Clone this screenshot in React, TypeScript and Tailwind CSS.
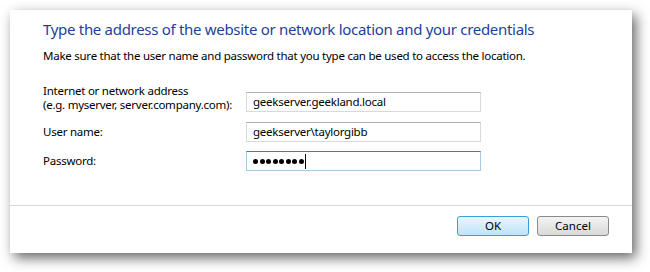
import React from "react";

export default function App() {
  const font = { fontFamily: '"Noto Sans", "Open Sans", sans-serif' };
  return (
    <div className="w-[650px] h-[272px] bg-white pt-[10px] pl-[10px] overflow-hidden" style={font}>
      <div className="w-[622px] h-[243px] bg-white flex flex-col shadow-[4px_5px_12px_rgba(0,0,0,0.6)]">
        <div className="flex-1 pl-[33px] pt-[8px]">
          <div className="text-[15px] leading-[22px] text-[#1e3f9c] whitespace-nowrap tracking-[-0.3px]">
            Type the address of the website or network location and your credentials
          </div>
          <div className="mt-[8px] text-[11.5px] leading-[16px] text-black whitespace-nowrap tracking-[-0.25px]">
            Make sure that the user name and password that you type can be used to access the location.
          </div>
          <div className="mt-[20px] flex flex-col text-[11.5px] text-black tracking-[-0.25px]">
            <div className="flex items-start">
              <div className="w-[203px] leading-[14px] whitespace-nowrap">
                <div>Internet or network address</div>
                <div>(e.g. myserver, server.company.com):</div>
              </div>
              <div className="mt-[8px] w-[235px] h-[20px] border border-[#d5d9e0] border-t-[#abadb3] flex items-center pl-[6px] leading-none">
                geekserver.geekland.local
              </div>
            </div>
            <div className="flex items-center mt-[10px]">
              <div className="w-[203px]">User name:</div>
              <div className="w-[235px] h-[20px] border border-[#d5d9e0] border-t-[#abadb3] flex items-center pl-[6px] leading-none">
                geekserver\taylorgibb
              </div>
            </div>
            <div className="flex items-center mt-[9px]">
              <div className="w-[203px]">Password:</div>
              <div className="w-[235px] h-[20px] border border-[#a4c9e3] border-t-[#3d7bad] flex items-center pl-[6px]">
                <span className="flex items-center gap-[1.5px]">
                  {Array.from({ length: 8 }).map((_, i) => (
                    <span key={i} className="w-[5px] h-[5px] rounded-full bg-black" />
                  ))}
                </span>
                <span className="ml-[1px] w-[1px] h-[15px] bg-black" />
              </div>
            </div>
          </div>
        </div>
        <div className="h-[48px] border-t border-[#d8d8d8] flex justify-end items-start pt-[10px] pr-[23px] gap-[8px]">
          <button className="w-[72px] h-[20px] rounded-[3px] border border-[#3c9ed8] bg-gradient-to-b from-[#eaf6fd] to-[#bfe3f8] text-[11.5px] leading-none text-black">
            OK
          </button>
          <button className="w-[72px] h-[20px] rounded-[3px] border border-[#8a8a8a] bg-gradient-to-b from-[#f4f4f4] to-[#d9d9d9] text-[11.5px] leading-none text-black">
            Cancel
          </button>
        </div>
      </div>
    </div>
  );
}
